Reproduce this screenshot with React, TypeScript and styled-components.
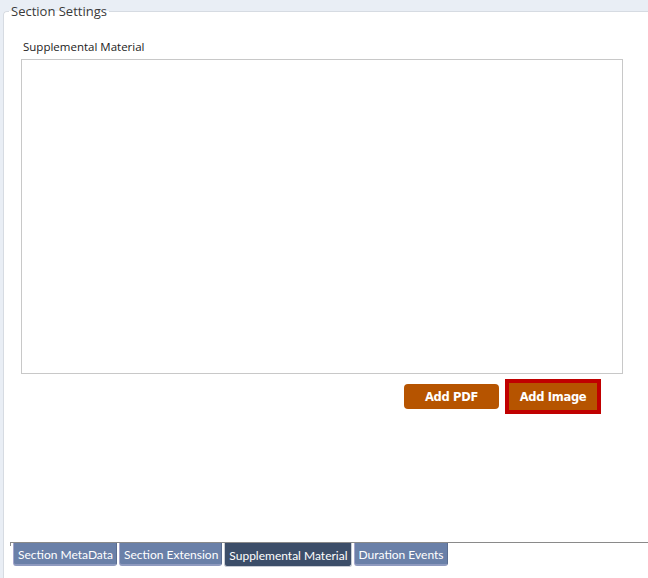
import React from "react";
import styled, { createGlobalStyle } from "styled-components";

const GlobalStyle = createGlobalStyle`
  html, body {
    margin: 0;
    padding: 0;
    background: #e9eef5;
    font-family: "Open Sans", "Noto Sans", "DejaVu Sans", sans-serif;
  }
`;

const tabs = [
  { label: "Section MetaData", active: false },
  { label: "Section Extension", active: false },
  { label: "Supplemental Material", active: true },
  { label: "Duration Events", active: false },
];

export default function App() {
  return (
    <>
      <GlobalStyle />
      <Page>
        <Settings>
          <Legend>Section Settings</Legend>
          <Body>
            <FieldLabel>Supplemental Material</FieldLabel>
            <MaterialBox />
            <Actions>
              <ActionButton>Add PDF</ActionButton>
              <Focused>
                <ActionButton $flat>Add Image</ActionButton>
              </Focused>
            </Actions>
          </Body>
          <TabStrip>
            {tabs.map((t) => (
              <Tab key={t.label} $active={t.active}>
                {t.label}
              </Tab>
            ))}
          </TabStrip>
        </Settings>
      </Page>
    </>
  );
}

const Page = styled.div`
  width: 648px;
  height: 578px;
  overflow: hidden;
  padding-left: 3px;
  box-sizing: border-box;
`;

const Settings = styled.fieldset`
  margin: 3px 0 0 0;
  padding: 0;
  width: 700px;
  height: 575px;
  box-sizing: border-box;
  border: 1px solid #d6dbe2;
  border-right: none;
  border-bottom: none;
  border-top-left-radius: 4px;
  background: #fff;
  display: flex;
  flex-direction: column;
`;

const Legend = styled.legend`
  margin-left: 5px;
  padding: 0 2px;
  font-size: 13px;
  line-height: 16px;
  color: #3a3a3a;
`;

const Body = styled.div`
  flex: 1;
  display: flex;
  flex-direction: column;
  padding: 20px 0 0 17px;
`;

const FieldLabel = styled.div`
  margin-left: 2px;
  font-size: 11.5px;
  line-height: 16px;
  color: #222;
  margin-bottom: 4px;
`;

const MaterialBox = styled.div`
  width: 602px;
  height: 315px;
  box-sizing: border-box;
  border: 1px solid #c8c8c8;
  background: #fff;
`;

const Actions = styled.div`
  width: 580px;
  margin-top: 5px;
  display: flex;
  justify-content: flex-end;
  align-items: center;
  gap: 6px;
`;

const ActionButton = styled.div<{ $flat?: boolean }>`
  width: ${(p) => (p.$flat ? "88px" : "95px")};
  height: ${(p) => (p.$flat ? "27px" : "25px")};
  box-sizing: border-box;
  display: flex;
  align-items: center;
  justify-content: center;
  background: #b65400;
  border-radius: ${(p) => (p.$flat ? "0" : "4px")};
  color: #fff;
  font-family: "DejaVu Sans", Verdana, sans-serif;
  font-weight: bold;
  font-size: 11.5px;
  letter-spacing: -0.3px;
`;

const Focused = styled.div`
  border: 4px solid #c00000;
  display: flex;
`;

const TabStrip = styled.div`
  margin: 0 0 11px 6px;
  border-top: 1px solid #8a8a8a;
  display: flex;
  align-items: flex-start;
  gap: 2px;
  padding-left: 3px;
  position: relative;
  &::before {
    content: "";
    position: absolute;
    left: 0;
    top: 0;
    width: 1px;
    height: 3px;
    background: #8a8a8a;
  }
`;

const Tab = styled.div<{ $active: boolean }>`
  height: ${(p) => (p.$active ? "24px" : "23px")};
  box-sizing: border-box;
  padding: 1px 3px 0 4px;
  display: flex;
  align-items: center;
  font-family: Lato, "Open Sans", sans-serif;
  font-size: 12px;
  color: #fff;
  white-space: nowrap;
  border-bottom-left-radius: 3px;
  border-bottom-right-radius: 3px;
  background: ${(p) => (p.$active ? "#3c4e69" : "#6a80a8")};
  border-left: 1px solid ${(p) => (p.$active ? "#c8ccd4" : "#a4a6cc")};
  border-right: 1px solid ${(p) => (p.$active ? "#c8ccd4" : "#5a6d90")};
  border-bottom: ${(p) => (p.$active ? "1px solid #c8ccd4" : "2px solid #8e9abf")};
`;
